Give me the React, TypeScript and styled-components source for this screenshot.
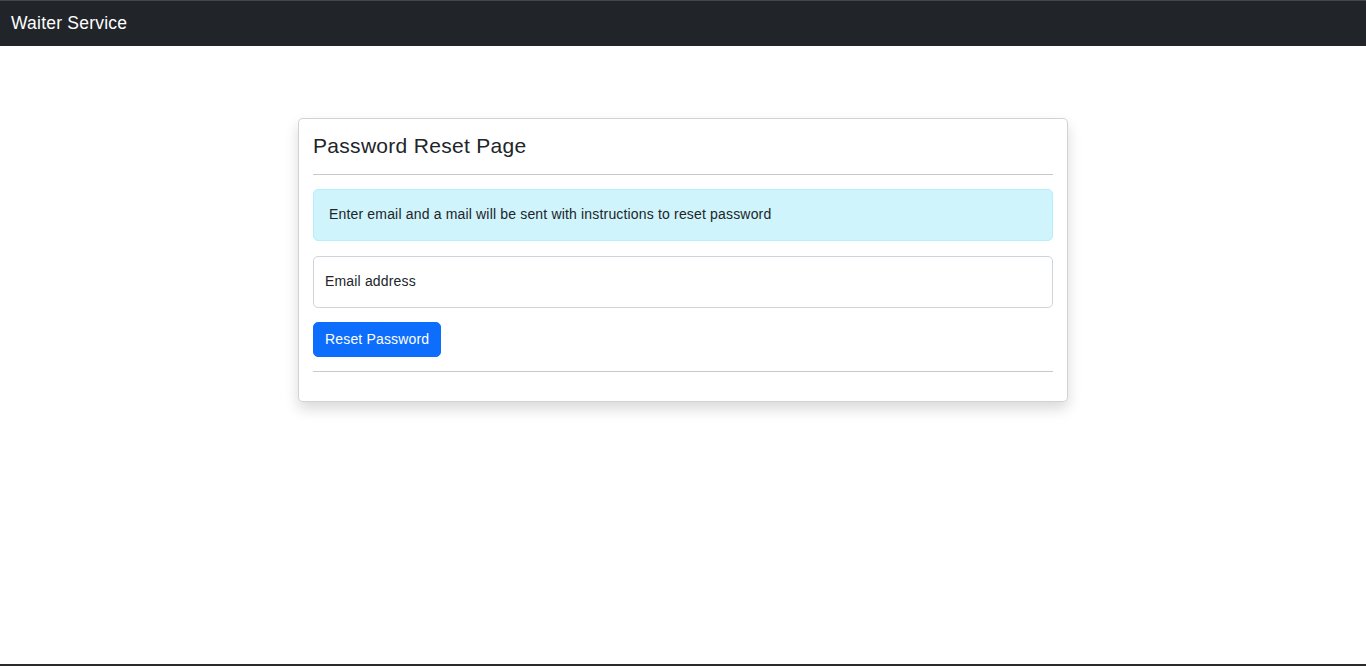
import React from "react";
import styled, { createGlobalStyle } from "styled-components";

const GlobalStyle = createGlobalStyle`
  * { box-sizing: border-box; }
  html, body { margin: 0; padding: 0; }
  body {
    font-family: "Liberation Sans", Arial, sans-serif;
    font-size: 14px;
    line-height: 1.5;
    letter-spacing: 0.17px;
    color: #212529;
    background: #fff;
  }
`;

const Page = styled.div`
  height: 666px;
  display: flex;
  flex-direction: column;
  border-top: 1px solid #44474b;
  border-bottom: 2px solid #2a2a2a;
  overflow: hidden;
`;

const Navbar = styled.nav`
  height: 45px;
  flex: none;
  background: #212529;
  display: flex;
  align-items: center;
  padding: 0 11px;
`;

const Brand = styled.a`
  color: #fff;
  font-size: 17.5px;
  line-height: 26px;
  letter-spacing: 0.22px;
  text-decoration: none;
  margin-top: -1px;
`;

const Main = styled.main`
  flex: 1;
  display: flex;
  justify-content: center;
  align-items: flex-start;
  padding-top: 72px;
`;

const Card = styled.section`
  width: 770px;
  background: #fff;
  border: 1px solid rgba(0, 0, 0, 0.175);
  border-radius: 5px;
  box-shadow: 0 7px 14px rgba(0, 0, 0, 0.15);
  padding: 14px 14px 15px;
  display: flex;
  flex-direction: column;
`;

const Title = styled.h4`
  margin: 0;
  font-size: 21px;
  font-weight: 400;
  line-height: 25px;
  letter-spacing: 0.3px;
`;

const Rule = styled.hr<{ $top: number }>`
  margin: ${(p) => p.$top}px 0 14px;
  border: 0;
  border-top: 1px solid #c8c9ca;
  height: 0;
`;

const Alert = styled.div`
  background: #cff4fc;
  border: 1px solid #b6effb;
  border-radius: 5px;
  color: #212529;
  padding: 13px 15px 15px;
  line-height: 22px;
  margin-bottom: 15px;
`;

const Field = styled.label`
  display: flex;
  align-items: center;
  height: 52px;
  border: 1px solid #ced4da;
  border-radius: 5px;
  padding: 0 11px 2px;
  color: #212529;
  margin-bottom: 14px;
  cursor: text;
`;

const Button = styled.button`
  align-self: flex-start;
  height: 35px;
  padding: 0 11px;
  background: #0d6efd;
  border: 1px solid #0d6efd;
  border-radius: 5px;
  color: #fff;
  font-family: inherit;
  font-size: 14px;
  line-height: 21px;
  letter-spacing: 0.17px;
  cursor: pointer;
`;

export default function App() {
  return (
    <>
      <GlobalStyle />
      <Page>
        <Navbar>
          <Brand href="#">Waiter Service</Brand>
        </Navbar>
        <Main>
          <Card>
            <Title>Password Reset Page</Title>
            <Rule $top={16} />
            <Alert>Enter email and a mail will be sent with instructions to reset password</Alert>
            <Field>Email address</Field>
            <Button type="button">Reset Password</Button>
            <Rule $top={14} />
          </Card>
        </Main>
      </Page>
    </>
  );
}
